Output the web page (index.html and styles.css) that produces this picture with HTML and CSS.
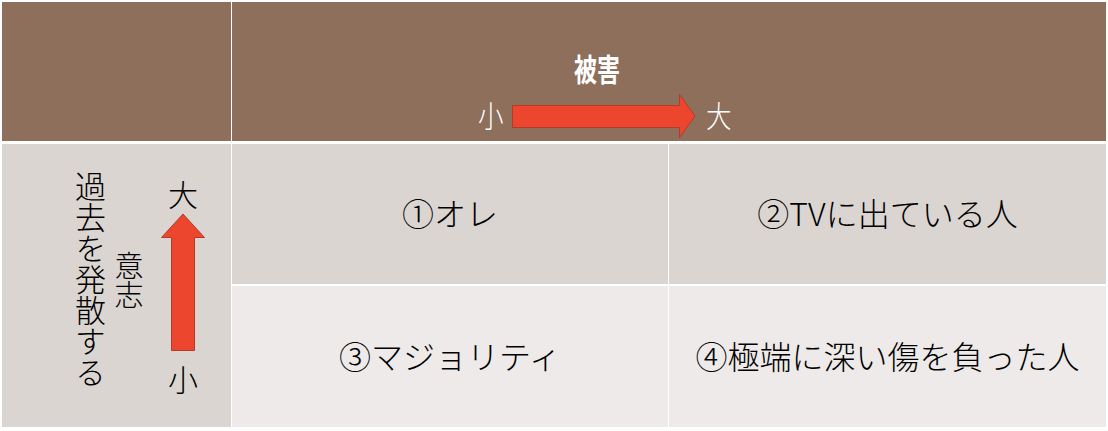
FILE: index.html
```html
<!DOCTYPE html>
<html lang="ja">
<head>
<meta charset="utf-8">
<title>被害と意志のマトリクス</title>
<link rel="stylesheet" href="styles.css">
</head>
<body>
<div class="matrix">
  <div class="cell head-corner"></div>
  <div class="cell head-main">
    <div class="head-group">
      <div class="head-title"><span>被害</span></div>
      <div class="head-scale">
        <span class="scale-label">小</span>
        <svg class="arrow-right" width="184" height="46" viewBox="0 0 184 46">
          <path d="M0.5 12.5 H167.5 V1.5 L183 23 L167.5 44.5 V34.5 H0.5 Z" fill="#EC462E" stroke="#B53A2A" stroke-width="1"/>
        </svg>
        <span class="scale-label">大</span>
      </div>
    </div>
  </div>
  <div class="cell side">
    <div class="side-text side-main">過去を発散する</div>
    <div class="side-text side-sub">意志</div>
    <div class="side-scale">
      <span class="side-label side-top">大</span>
      <svg class="arrow-up" width="46" height="138" viewBox="0 0 46 138">
        <path d="M23 1 L44.5 24.5 H34.5 V137.5 H11.5 V24.5 H1.5 Z" fill="#EC462E" stroke="#B53A2A" stroke-width="1"/>
      </svg>
      <span class="side-label side-bottom">小</span>
    </div>
  </div>
  <div class="cell item row-a">①オレ</div>
  <div class="cell item row-a">②TVに出ている人</div>
  <div class="cell item row-b">③マジョリティ</div>
  <div class="cell item row-b">④極端に深い傷を負った人</div>
</div>
</body>
</html>
```

FILE: styles.css
```css
html, body {
  margin: 0;
  padding: 0;
  background: #ffffff;
}

body {
  font-family: "Noto Sans CJK JP", "Noto Sans", sans-serif;
  color: #000;
}

.matrix {
  display: grid;
  grid-template-columns: 229px 436px 437px;
  grid-template-rows: 140px 140px 141px;
  column-gap: 1px;
  row-gap: 2px;
  padding: 2px 0 0 2px;
  width: 1104px;
}

.cell {
  box-sizing: border-box;
}

.head-corner,
.head-main {
  background: #8D6F5C;
  margin-bottom: 1px;
}

.head-main {
  grid-column: 2 / 4;
  display: flex;
  padding: 51px 0 0 244px;
}

.head-group {
  display: flex;
  flex-direction: column;
  align-items: center;
}

.head-title {
  color: #fff;
  font-weight: 700;
  font-size: 31px;
  line-height: 30px;
  height: 30px;
  margin-right: 14px;
}

.head-title span {
  display: inline-block;
  transform: scaleX(0.74);
}

.head-scale {
  display: flex;
  align-items: center;
  gap: 8px;
  margin-top: 10px;
}

.scale-label {
  color: #fff;
  font-size: 30px;
  line-height: 30px;
  width: 28px;
  text-align: center;
  font-weight: 300;
  margin-top: -4px;
  display: inline-block;
  transform: scaleX(0.85);
}

.arrow-right,
.arrow-up {
  display: block;
}

.side {
  grid-row: 2 / 4;
  background: #DAD5D1;
  display: flex;
  align-items: center;
  padding-left: 73px;
}

.side-text {
  writing-mode: vertical-rl;
  line-height: 1;
  font-weight: 300;
  margin-bottom: 8px;
}

.side-main {
  font-size: 31px;
  margin-bottom: 12px;
}

.side-sub {
  font-size: 29px;
  margin-left: 8px;
  margin-bottom: 12px;
}

.side-scale {
  display: flex;
  flex-direction: column;
  align-items: center;
  margin-left: 17px;
}

.side-label {
  font-size: 30px;
  line-height: 30px;
  font-weight: 300;
}

.side-top {
  margin-bottom: 5px;
}

.side-bottom {
  margin-top: 12px;
}

.item {
  display: flex;
  align-items: center;
  justify-content: center;
  font-size: 32px;
  font-weight: 300;
  line-height: 1;
  padding-bottom: 4px;
}

.row-a {
  background: #DAD5D1;
}

.row-b {
  background: #EDEAE9;
}
```
